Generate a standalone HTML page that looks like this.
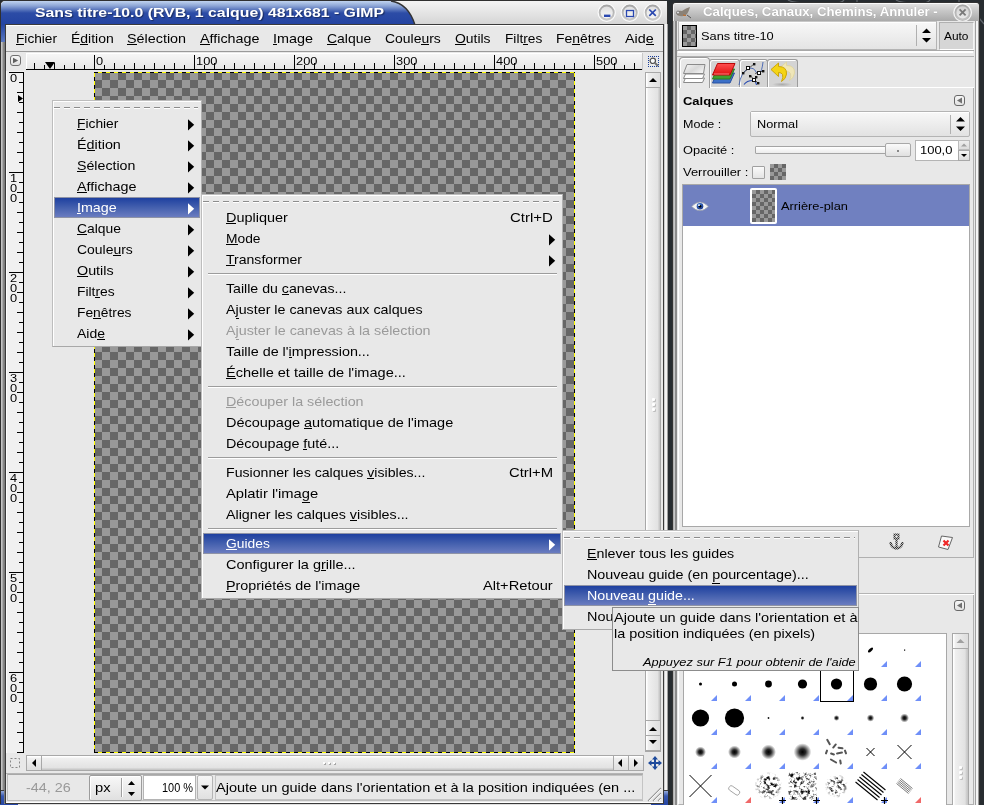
<!DOCTYPE html><html><head><meta charset="utf-8"><style>
html,body{margin:0;padding:0;width:984px;height:805px;overflow:hidden;background:#272c30;font-family:"Liberation Sans",sans-serif}
body>div,body>svg{position:absolute}
.t{white-space:nowrap;transform-origin:0 0}
</style></head><body>
<div style="left:0px;top:0px;width:668px;height:805px;background:#303030;border-radius:5px 5px 0 0"></div>
<div style="left:1px;top:1px;width:666px;height:804px;background:linear-gradient(90deg,#c8c8c8 0,#c0c0c0 1px,#929292 2px,#7c7c7c 3px,#7c7c7c 4px);border-radius:4px 4px 0 0"></div>
<svg style="left:0;top:0" width="668" height="26"><defs><linearGradient id="tb" x1="0" y1="0" x2="0" y2="1"><stop offset="0" stop-color="#c0d4f0"/><stop offset="0.2" stop-color="#8ea6d6"/><stop offset="0.5" stop-color="#2c4ca6"/><stop offset="1" stop-color="#2343a0"/></linearGradient><linearGradient id="tg" x1="0" y1="0" x2="0" y2="1"><stop offset="0" stop-color="#f4f4f4"/><stop offset="1" stop-color="#d4d4d4"/></linearGradient></defs><path d="M1,25 L1,6 Q1,1 6,1 L667,1 L667,25 Z" fill="url(#tg)"/><path d="M1,25 L1,6 Q1,1 6,1 L391,1 C404,3 411,12 415,25 Z" fill="url(#tb)"/><path d="M391,1 C404,3 411,12 415,25" fill="none" stroke="#333" stroke-width="1.3"/></svg>
<div style="left:1px;top:24px;width:4px;height:18px;background:linear-gradient(180deg,#2343a0,#5a78c0)"></div>
<div class="t" style="left:34.50px;top:3.28px;font-size:13.6px;line-height:20px;color:#fff;transform:scaleX(1.1648);font-weight:bold;text-shadow:1px 1px 1px rgba(0,0,0,.4);">Sans titre-10.0 (RVB, 1 calque) 481x681 - GIMP</div>
<svg style="left:596px;top:0px" width="72" height="25"><defs><linearGradient id="bin" x1="0" y1="0" x2="0" y2="1"><stop offset="0" stop-color="#dcdcdc"/><stop offset="0.5" stop-color="#ececec"/><stop offset="1" stop-color="#f6f6f6"/></linearGradient><linearGradient id="brg" x1="0" y1="0" x2="0" y2="1"><stop offset="0" stop-color="#a6a6a6"/><stop offset="1" stop-color="#c8c8c8"/></linearGradient></defs><g stroke="#fff" stroke-opacity="0.85" stroke-width="1.2" fill="none"><circle cx="10.7" cy="12.8" r="8.6"/><circle cx="33.7" cy="12.8" r="8.6"/><circle cx="56.7" cy="12.8" r="8.6"/></g><g fill="url(#bin)" stroke="url(#brg)" stroke-width="1.8"><circle cx="10.7" cy="12.5" r="7"/><circle cx="33.7" cy="12.5" r="7"/><circle cx="56.7" cy="12.5" r="7"/></g><rect x="8" y="14.6" width="6.4" height="2.4" fill="#2a48b0"/><rect x="30.5" y="10.5" width="7" height="6" fill="none" stroke="#2a48b0" stroke-width="1.3"/><path d="M53.3,9.5 L59.8,15.8 M59.8,9.5 L53.3,15.8" stroke="#2a48b0" stroke-width="1.7"/></svg>
<div style="left:5px;top:24px;width:659px;height:780px;background:#3a3a3a"></div>
<div style="left:6px;top:25px;width:657px;height:778px;background:#e8e8e8"></div>
<div style="left:664px;top:24px;width:4px;height:781px;background:linear-gradient(90deg,#d0d0d0 0 1px,#f4f4f4 1px 3px,#a0a0a0 3px)"></div>
<div style="left:6px;top:25px;width:657px;height:1px;background:#fff"></div>
<div style="left:6px;top:51px;width:657px;height:1px;background:#9a9a9a"></div>
<div class="t" style="left:16.00px;top:29.46px;font-size:13.1px;line-height:20px;color:#000;transform:scaleX(1.0430);">Fichier</div>
<div style="left:16.00px;top:44px;width:8.35px;height:1px;background:#000"></div>
<div class="t" style="left:70.50px;top:29.46px;font-size:13.1px;line-height:20px;color:#000;transform:scaleX(1.0660);">Édition</div>
<div style="left:79.81px;top:44px;width:7.77px;height:1px;background:#000"></div>
<div class="t" style="left:127.00px;top:29.46px;font-size:13.1px;line-height:20px;color:#000;transform:scaleX(1.0966);">Sélection</div>
<div style="left:127.00px;top:44px;width:9.58px;height:1px;background:#000"></div>
<div class="t" style="left:200.00px;top:29.46px;font-size:13.1px;line-height:20px;color:#000;transform:scaleX(1.0941);">Affichage</div>
<div style="left:200.00px;top:44px;width:9.56px;height:1px;background:#000"></div>
<div class="t" style="left:273.00px;top:29.46px;font-size:13.1px;line-height:20px;color:#000;transform:scaleX(1.0986);">Image</div>
<div style="left:273.00px;top:44px;width:4.00px;height:1px;background:#000"></div>
<div class="t" style="left:327.00px;top:29.46px;font-size:13.1px;line-height:20px;color:#000;transform:scaleX(1.0647);">Calque</div>
<div style="left:327.00px;top:44px;width:10.07px;height:1px;background:#000"></div>
<div class="t" style="left:385.00px;top:29.46px;font-size:13.1px;line-height:20px;color:#000;transform:scaleX(1.0643);">Couleurs</div>
<div style="left:421.43px;top:44px;width:7.75px;height:1px;background:#000"></div>
<div class="t" style="left:455.00px;top:29.46px;font-size:13.1px;line-height:20px;color:#000;transform:scaleX(1.0631);">Outils</div>
<div style="left:455.00px;top:44px;width:10.83px;height:1px;background:#000"></div>
<div class="t" style="left:505.00px;top:29.46px;font-size:13.1px;line-height:20px;color:#000;transform:scaleX(1.0459);">Filtres</div>
<div style="left:523.27px;top:44px;width:4.56px;height:1px;background:#000"></div>
<div class="t" style="left:556.00px;top:29.46px;font-size:13.1px;line-height:20px;color:#000;transform:scaleX(1.0619);">Fenêtres</div>
<div style="left:572.24px;top:44px;width:7.74px;height:1px;background:#000"></div>
<div class="t" style="left:625.00px;top:29.46px;font-size:13.1px;line-height:20px;color:#000;transform:scaleX(1.0908);">Aide</div>
<div style="left:645.65px;top:44px;width:7.95px;height:1px;background:#000"></div>
<div style="left:10px;top:55px;width:11px;height:11px;border:1px solid #707070;border-radius:3px;box-sizing:border-box;background:linear-gradient(#f6f6f6,#e2e2e2)"></div>
<svg style="left:10px;top:55px" width="11" height="11"><path d="M3,2.8 L8.2,5.5 L3,8.2 Z" fill="#606060"/></svg>
<div style="left:26px;top:53px;width:616px;height:17px;background:linear-gradient(#f6f6f6,#e4e4e4);border-top:1px solid #fff;border-left:1px solid #fff;box-sizing:border-box"></div>
<div style="left:642px;top:53px;width:1px;height:17px;background:#c8c8c8"></div>
<div style="left:26px;top:69px;width:616px;height:1px;background:#000"></div>
<svg style="left:0;top:0" width="984" height="805"><rect x="34" y="63" width="1" height="6" fill="#000"/><rect x="44" y="65" width="1" height="4" fill="#000"/><rect x="54" y="63" width="1" height="6" fill="#000"/><rect x="64" y="65" width="1" height="4" fill="#000"/><rect x="74" y="63" width="1" height="6" fill="#000"/><rect x="84" y="65" width="1" height="4" fill="#000"/><rect x="94" y="55" width="1" height="14" fill="#000"/><rect x="104" y="65" width="1" height="4" fill="#000"/><rect x="114" y="63" width="1" height="6" fill="#000"/><rect x="124" y="65" width="1" height="4" fill="#000"/><rect x="134" y="63" width="1" height="6" fill="#000"/><rect x="144" y="65" width="1" height="4" fill="#000"/><rect x="154" y="63" width="1" height="6" fill="#000"/><rect x="164" y="65" width="1" height="4" fill="#000"/><rect x="174" y="63" width="1" height="6" fill="#000"/><rect x="184" y="65" width="1" height="4" fill="#000"/><rect x="194" y="55" width="1" height="14" fill="#000"/><rect x="204" y="65" width="1" height="4" fill="#000"/><rect x="214" y="63" width="1" height="6" fill="#000"/><rect x="224" y="65" width="1" height="4" fill="#000"/><rect x="234" y="63" width="1" height="6" fill="#000"/><rect x="244" y="65" width="1" height="4" fill="#000"/><rect x="254" y="63" width="1" height="6" fill="#000"/><rect x="264" y="65" width="1" height="4" fill="#000"/><rect x="274" y="63" width="1" height="6" fill="#000"/><rect x="284" y="65" width="1" height="4" fill="#000"/><rect x="294" y="55" width="1" height="14" fill="#000"/><rect x="304" y="65" width="1" height="4" fill="#000"/><rect x="314" y="63" width="1" height="6" fill="#000"/><rect x="324" y="65" width="1" height="4" fill="#000"/><rect x="334" y="63" width="1" height="6" fill="#000"/><rect x="344" y="65" width="1" height="4" fill="#000"/><rect x="354" y="63" width="1" height="6" fill="#000"/><rect x="364" y="65" width="1" height="4" fill="#000"/><rect x="374" y="63" width="1" height="6" fill="#000"/><rect x="384" y="65" width="1" height="4" fill="#000"/><rect x="394" y="55" width="1" height="14" fill="#000"/><rect x="404" y="65" width="1" height="4" fill="#000"/><rect x="414" y="63" width="1" height="6" fill="#000"/><rect x="424" y="65" width="1" height="4" fill="#000"/><rect x="434" y="63" width="1" height="6" fill="#000"/><rect x="444" y="65" width="1" height="4" fill="#000"/><rect x="454" y="63" width="1" height="6" fill="#000"/><rect x="464" y="65" width="1" height="4" fill="#000"/><rect x="474" y="63" width="1" height="6" fill="#000"/><rect x="484" y="65" width="1" height="4" fill="#000"/><rect x="494" y="55" width="1" height="14" fill="#000"/><rect x="504" y="65" width="1" height="4" fill="#000"/><rect x="514" y="63" width="1" height="6" fill="#000"/><rect x="524" y="65" width="1" height="4" fill="#000"/><rect x="534" y="63" width="1" height="6" fill="#000"/><rect x="544" y="65" width="1" height="4" fill="#000"/><rect x="554" y="63" width="1" height="6" fill="#000"/><rect x="564" y="65" width="1" height="4" fill="#000"/><rect x="574" y="63" width="1" height="6" fill="#000"/><rect x="584" y="65" width="1" height="4" fill="#000"/><rect x="594" y="55" width="1" height="14" fill="#000"/><rect x="604" y="65" width="1" height="4" fill="#000"/><rect x="614" y="63" width="1" height="6" fill="#000"/><rect x="624" y="65" width="1" height="4" fill="#000"/><rect x="634" y="63" width="1" height="6" fill="#000"/><path d="M45,62 L55,62 L50,69 Z" fill="#000"/><rect x="6" y="71" width="18" height="682" fill="#f0f0f0"/><rect x="6" y="71" width="1" height="682" fill="#fff"/><rect x="23" y="72" width="1" height="681" fill="#000"/><rect x="9" y="72" width="14" height="1" fill="#000"/><rect x="19" y="82" width="4" height="1" fill="#000"/><rect x="17" y="92" width="6" height="1" fill="#000"/><rect x="19" y="102" width="4" height="1" fill="#000"/><rect x="17" y="112" width="6" height="1" fill="#000"/><rect x="19" y="122" width="4" height="1" fill="#000"/><rect x="17" y="132" width="6" height="1" fill="#000"/><rect x="19" y="142" width="4" height="1" fill="#000"/><rect x="17" y="152" width="6" height="1" fill="#000"/><rect x="19" y="162" width="4" height="1" fill="#000"/><rect x="9" y="172" width="14" height="1" fill="#000"/><rect x="19" y="182" width="4" height="1" fill="#000"/><rect x="17" y="192" width="6" height="1" fill="#000"/><rect x="19" y="202" width="4" height="1" fill="#000"/><rect x="17" y="212" width="6" height="1" fill="#000"/><rect x="19" y="222" width="4" height="1" fill="#000"/><rect x="17" y="232" width="6" height="1" fill="#000"/><rect x="19" y="242" width="4" height="1" fill="#000"/><rect x="17" y="252" width="6" height="1" fill="#000"/><rect x="19" y="262" width="4" height="1" fill="#000"/><rect x="9" y="272" width="14" height="1" fill="#000"/><rect x="19" y="282" width="4" height="1" fill="#000"/><rect x="17" y="292" width="6" height="1" fill="#000"/><rect x="19" y="302" width="4" height="1" fill="#000"/><rect x="17" y="312" width="6" height="1" fill="#000"/><rect x="19" y="322" width="4" height="1" fill="#000"/><rect x="17" y="332" width="6" height="1" fill="#000"/><rect x="19" y="342" width="4" height="1" fill="#000"/><rect x="17" y="352" width="6" height="1" fill="#000"/><rect x="19" y="362" width="4" height="1" fill="#000"/><rect x="9" y="372" width="14" height="1" fill="#000"/><rect x="19" y="382" width="4" height="1" fill="#000"/><rect x="17" y="392" width="6" height="1" fill="#000"/><rect x="19" y="402" width="4" height="1" fill="#000"/><rect x="17" y="412" width="6" height="1" fill="#000"/><rect x="19" y="422" width="4" height="1" fill="#000"/><rect x="17" y="432" width="6" height="1" fill="#000"/><rect x="19" y="442" width="4" height="1" fill="#000"/><rect x="17" y="452" width="6" height="1" fill="#000"/><rect x="19" y="462" width="4" height="1" fill="#000"/><rect x="9" y="472" width="14" height="1" fill="#000"/><rect x="19" y="482" width="4" height="1" fill="#000"/><rect x="17" y="492" width="6" height="1" fill="#000"/><rect x="19" y="502" width="4" height="1" fill="#000"/><rect x="17" y="512" width="6" height="1" fill="#000"/><rect x="19" y="522" width="4" height="1" fill="#000"/><rect x="17" y="532" width="6" height="1" fill="#000"/><rect x="19" y="542" width="4" height="1" fill="#000"/><rect x="17" y="552" width="6" height="1" fill="#000"/><rect x="19" y="562" width="4" height="1" fill="#000"/><rect x="9" y="572" width="14" height="1" fill="#000"/><rect x="19" y="582" width="4" height="1" fill="#000"/><rect x="17" y="592" width="6" height="1" fill="#000"/><rect x="19" y="602" width="4" height="1" fill="#000"/><rect x="17" y="612" width="6" height="1" fill="#000"/><rect x="19" y="622" width="4" height="1" fill="#000"/><rect x="17" y="632" width="6" height="1" fill="#000"/><rect x="19" y="642" width="4" height="1" fill="#000"/><rect x="17" y="652" width="6" height="1" fill="#000"/><rect x="19" y="662" width="4" height="1" fill="#000"/><rect x="9" y="672" width="14" height="1" fill="#000"/><rect x="19" y="682" width="4" height="1" fill="#000"/><rect x="17" y="692" width="6" height="1" fill="#000"/><rect x="19" y="702" width="4" height="1" fill="#000"/><rect x="17" y="712" width="6" height="1" fill="#000"/><rect x="19" y="722" width="4" height="1" fill="#000"/><rect x="17" y="732" width="6" height="1" fill="#000"/><rect x="19" y="742" width="4" height="1" fill="#000"/><rect x="17" y="752" width="6" height="1" fill="#000"/><path d="M18,95 L23,98.5 L18,102 Z" fill="#000"/></svg>
<div class="t" style="left:96.00px;top:51.01px;font-size:11.5px;line-height:20px;color:#000;transform:scaleX(1.1141);">0</div>
<div class="t" style="left:196.00px;top:51.01px;font-size:11.5px;line-height:20px;color:#000;transform:scaleX(1.1141);">100</div>
<div class="t" style="left:296.00px;top:51.01px;font-size:11.5px;line-height:20px;color:#000;transform:scaleX(1.1141);">200</div>
<div class="t" style="left:396.00px;top:51.01px;font-size:11.5px;line-height:20px;color:#000;transform:scaleX(1.1141);">300</div>
<div class="t" style="left:496.00px;top:51.01px;font-size:11.5px;line-height:20px;color:#000;transform:scaleX(1.1141);">400</div>
<div class="t" style="left:596.00px;top:51.01px;font-size:11.5px;line-height:20px;color:#000;transform:scaleX(1.1141);">500</div>
<div class="t" style="left:10.00px;top:68.01px;font-size:11.5px;line-height:20px;color:#000;transform:scaleX(1.1141);">0</div>
<div class="t" style="left:10.00px;top:168.01px;font-size:11.5px;line-height:20px;color:#000;transform:scaleX(1.1141);">1</div>
<div class="t" style="left:10.00px;top:178.01px;font-size:11.5px;line-height:20px;color:#000;transform:scaleX(1.1141);">0</div>
<div class="t" style="left:10.00px;top:188.01px;font-size:11.5px;line-height:20px;color:#000;transform:scaleX(1.1141);">0</div>
<div class="t" style="left:10.00px;top:268.01px;font-size:11.5px;line-height:20px;color:#000;transform:scaleX(1.1141);">2</div>
<div class="t" style="left:10.00px;top:278.01px;font-size:11.5px;line-height:20px;color:#000;transform:scaleX(1.1141);">0</div>
<div class="t" style="left:10.00px;top:288.01px;font-size:11.5px;line-height:20px;color:#000;transform:scaleX(1.1141);">0</div>
<div class="t" style="left:10.00px;top:368.01px;font-size:11.5px;line-height:20px;color:#000;transform:scaleX(1.1141);">3</div>
<div class="t" style="left:10.00px;top:378.01px;font-size:11.5px;line-height:20px;color:#000;transform:scaleX(1.1141);">0</div>
<div class="t" style="left:10.00px;top:388.01px;font-size:11.5px;line-height:20px;color:#000;transform:scaleX(1.1141);">0</div>
<div class="t" style="left:10.00px;top:468.01px;font-size:11.5px;line-height:20px;color:#000;transform:scaleX(1.1141);">4</div>
<div class="t" style="left:10.00px;top:478.01px;font-size:11.5px;line-height:20px;color:#000;transform:scaleX(1.1141);">0</div>
<div class="t" style="left:10.00px;top:488.01px;font-size:11.5px;line-height:20px;color:#000;transform:scaleX(1.1141);">0</div>
<div class="t" style="left:10.00px;top:568.01px;font-size:11.5px;line-height:20px;color:#000;transform:scaleX(1.1141);">5</div>
<div class="t" style="left:10.00px;top:578.01px;font-size:11.5px;line-height:20px;color:#000;transform:scaleX(1.1141);">0</div>
<div class="t" style="left:10.00px;top:588.01px;font-size:11.5px;line-height:20px;color:#000;transform:scaleX(1.1141);">0</div>
<div class="t" style="left:10.00px;top:668.01px;font-size:11.5px;line-height:20px;color:#000;transform:scaleX(1.1141);">6</div>
<div class="t" style="left:10.00px;top:678.01px;font-size:11.5px;line-height:20px;color:#000;transform:scaleX(1.1141);">0</div>
<div class="t" style="left:10.00px;top:688.01px;font-size:11.5px;line-height:20px;color:#000;transform:scaleX(1.1141);">0</div>
<div style="left:94px;top:72px;width:481px;height:681px;background:conic-gradient(#666 25%,#999 0 50%,#666 0 75%,#999 0) 0 0/16px 16px"></div>
<div style="left:94px;top:72px;width:481px;height:1px;background:repeating-linear-gradient(90deg,#000 0 4px,#ff0 4px 8px)"></div>
<div style="left:94px;top:752px;width:481px;height:1px;background:repeating-linear-gradient(90deg,#000 0 4px,#ff0 4px 8px)"></div>
<div style="left:94px;top:72px;width:1px;height:681px;background:repeating-linear-gradient(180deg,#000 0 1px,#ff0 1px 5px,#000 5px 8px)"></div>
<div style="left:574px;top:72px;width:1px;height:681px;background:repeating-linear-gradient(180deg,#000 0 1px,#ff0 1px 5px,#000 5px 8px)"></div>
<svg style="left:648px;top:56px" width="12" height="12"><g fill="#1a3f9a"><rect x="0" y="0" width="1" height="1"/><rect x="0" y="10" width="1" height="1"/><rect x="0" y="0" width="1" height="1"/><rect x="10" y="0" width="1" height="1"/><rect x="2" y="0" width="1" height="1"/><rect x="2" y="10" width="1" height="1"/><rect x="0" y="2" width="1" height="1"/><rect x="10" y="2" width="1" height="1"/><rect x="4" y="0" width="1" height="1"/><rect x="4" y="10" width="1" height="1"/><rect x="0" y="4" width="1" height="1"/><rect x="10" y="4" width="1" height="1"/><rect x="6" y="0" width="1" height="1"/><rect x="6" y="10" width="1" height="1"/><rect x="0" y="6" width="1" height="1"/><rect x="10" y="6" width="1" height="1"/><rect x="8" y="0" width="1" height="1"/><rect x="8" y="10" width="1" height="1"/><rect x="0" y="8" width="1" height="1"/><rect x="10" y="8" width="1" height="1"/><rect x="10" y="0" width="1" height="1"/><rect x="10" y="10" width="1" height="1"/><rect x="0" y="10" width="1" height="1"/><rect x="10" y="10" width="1" height="1"/></g><circle cx="4.8" cy="4.8" r="2.7" fill="#fafafa" stroke="#505050" stroke-width="1.2"/><path d="M7,7 L10,10" stroke="#707070" stroke-width="1.8"/></svg>
<div style="left:645px;top:72px;width:16px;height:680px;background:#a8a8a8"></div>
<div style="left:646px;top:88px;width:14px;height:632px;background:linear-gradient(90deg,#fff 0,#fff 1px,#f0f0f0 2px,#e2e2e2 12px,#c8c8c8 13px)"></div>
<div style="left:652px;top:398px;width:3px;height:3px;background:#fff;border-radius:1px;box-shadow:1px 1px 0 #bdbdbd"></div>
<div style="left:652px;top:403px;width:3px;height:3px;background:#fff;border-radius:1px;box-shadow:1px 1px 0 #bdbdbd"></div>
<div style="left:652px;top:408px;width:3px;height:3px;background:#fff;border-radius:1px;box-shadow:1px 1px 0 #bdbdbd"></div>
<div style="left:646px;top:73px;width:14px;height:14px;background:linear-gradient(90deg,#fff 0,#fff 1px,#f0f0f0 2px,#e0e0e0 13px)"></div>
<div style="left:646px;top:721px;width:14px;height:14px;background:linear-gradient(90deg,#fff 0,#fff 1px,#f0f0f0 2px,#e0e0e0 13px)"></div>
<div style="left:646px;top:736px;width:14px;height:14px;background:linear-gradient(90deg,#fff 0,#fff 1px,#f0f0f0 2px,#e0e0e0 13px)"></div>
<svg style="left:645px;top:72px" width="16" height="680"><path d="M4,10 L8,6 L12,10 Z" fill="#000"/><rect x="0" y="15" width="16" height="1" fill="#a8a8a8"/><rect x="0" y="648" width="16" height="1" fill="#a8a8a8"/><rect x="0" y="663" width="16" height="1" fill="#a8a8a8"/><path d="M4,659 L8,655 L12,659 Z" fill="#000"/><path d="M4,668 L12,668 L8,672 Z" fill="#000"/></svg>
<div style="left:26px;top:755px;width:618px;height:16px;background:#a8a8a8"></div>
<div style="left:42px;top:756px;width:571px;height:14px;background:linear-gradient(#fff 0,#fff 1px,#f0f0f0 2px,#e2e2e2 12px,#c8c8c8 13px)"></div>
<div style="left:27px;top:756px;width:14px;height:14px;background:linear-gradient(#fff 0,#fff 1px,#f0f0f0 2px,#e0e0e0 13px)"></div>
<div style="left:614px;top:756px;width:14px;height:14px;background:linear-gradient(#fff 0,#fff 1px,#f0f0f0 2px,#e0e0e0 13px)"></div>
<div style="left:629px;top:756px;width:14px;height:14px;background:linear-gradient(#fff 0,#fff 1px,#f0f0f0 2px,#e0e0e0 13px)"></div>
<svg style="left:26px;top:755px" width="618" height="16"><path d="M10,4 L6,8 L10,12 Z" fill="#000"/><path d="M596,4 L592,8 L596,12 Z" fill="#000"/><path d="M608,4 L612,8 L608,12 Z" fill="#000"/></svg>
<svg style="left:8px;top:755px" width="16" height="16"><rect x="2.5" y="3.5" width="9" height="9" fill="none" stroke="#888" stroke-width="1" stroke-dasharray="2 2"/></svg>
<svg style="left:647px;top:755px" width="16" height="16"><g fill="#1d4a9c"><path d="M8,1 L11,4.5 L9,4.5 L9,7 L11.5,7 L11.5,5 L15,8 L11.5,11 L11.5,9 L9,9 L9,11.5 L11,11.5 L8,15 L5,11.5 L7,11.5 L7,9 L4.5,9 L4.5,11 L1,8 L4.5,5 L4.5,7 L7,7 L7,4.5 L5,4.5 Z"/></g></svg>
<div style="left:6px;top:773px;width:637px;height:1px;background:#b4b4b4"></div>
<div style="left:7px;top:774px;width:636px;height:27px;border:1px solid #bcbcbc;border-top-color:#a8a8a8;box-sizing:border-box;background:#e8e8e8"></div>
<div class="t" style="left:26.00px;top:778.46px;font-size:13.1px;line-height:20px;color:#999;transform:scaleX(1.1002);">-44, 26</div>
<div style="left:89px;top:775px;width:53px;height:26px;border:1px solid #9c9c9c;box-sizing:border-box;border-radius:2px;background:linear-gradient(#f8f8f8,#e0e0e0);box-shadow:inset 1px 1px 0 #fff"></div>
<div style="left:121px;top:778px;width:1px;height:19px;background:#a0a0a0"></div>
<div style="left:122px;top:778px;width:1px;height:19px;background:#fff"></div>
<svg style="left:122px;top:775px" width="19" height="25"><path d="M6,10 L9.5,6 L13,10 Z M6,17 L13,17 L9.5,21 Z" fill="#000"/></svg>
<div class="t" style="left:95.00px;top:778.46px;font-size:13.1px;line-height:20px;color:#000;transform:scaleX(1.1232);">px</div>
<div style="left:143px;top:775px;width:53px;height:25px;border:1px solid #b4b4b4;box-sizing:border-box;background:#fff"></div>
<div class="t" style="left:162.00px;top:778.46px;font-size:13.1px;line-height:20px;color:#000;transform:scaleX(0.8346);">100 %</div>
<div style="left:197px;top:775px;width:16px;height:25px;border:1px solid #b4b4b4;box-sizing:border-box;border-radius:2px;background:linear-gradient(#f6f6f6,#e0e0e0)"></div>
<svg style="left:197px;top:775px" width="16" height="25"><path d="M4,10.5 L12,10.5 L8,14.5 Z" fill="#000"/></svg>
<div style="left:215px;top:775px;width:428px;height:25px;border:1px solid #c4c4c4;box-sizing:border-box"></div>
<div class="t" style="left:216.00px;top:778.46px;font-size:13.1px;line-height:20px;color:#000;transform:scaleX(1.1089);">Ajoute un guide dans l&#x27;orientation et à la position indiquées (en ...</div>
<svg style="left:646px;top:786px" width="16" height="16"><path d="M15,2 L2,15 M15,7 L7,15 M15,12 L12,15" stroke="#9a9a9a" stroke-width="1.2"/><path d="M15,3 L3,15 M15,8 L8,15 M15,13 L13,15" stroke="#fff" stroke-width="0.8"/></svg>
<div style="left:1px;top:790px;width:3px;height:15px;background:linear-gradient(#a8bce4,#3858b0 40%,#2343a0)"></div>
<div style="left:1px;top:790px;width:3px;height:1px;background:#3a3a3a"></div>
<div style="left:0px;top:804px;width:18px;height:1px;background:#2343a0"></div>
<div style="left:6px;top:804px;width:658px;height:1px;background:#e0e0e0"></div>
<div style="left:0px;top:804px;width:18px;height:1px;background:#2848a8"></div>
<div style="left:664px;top:790px;width:4px;height:15px;background:linear-gradient(#a8bce4,#3858b0 40%,#2343a0)"></div>
<div style="left:664px;top:790px;width:4px;height:1px;background:#3a3a3a"></div>
<div style="left:651px;top:804px;width:17px;height:1px;background:#2848a8"></div>
<div style="left:6px;top:802px;width:657px;height:1px;background:#fff"></div>
<div style="left:323px;top:762px;width:2px;height:2px;background:#fff;box-shadow:1px 1px 0 #a8a8a8"></div>
<div style="left:328px;top:762px;width:2px;height:2px;background:#fff;box-shadow:1px 1px 0 #a8a8a8"></div>
<div style="left:333px;top:762px;width:2px;height:2px;background:#fff;box-shadow:1px 1px 0 #a8a8a8"></div>
<svg style="left:780px;top:0" width="204" height="30"><g stroke="#60666c" stroke-width="1.2" fill="none"><path d="M8,0 Q12,3 30,3 L55,3 Q62,3 64,0"/><path d="M116,0 Q120,3 135,3 L142,3 Q148,3 150,0"/><path d="M77,0 L77,2"/><path d="M179,0 L179,2"/><path d="M199,18 L204,24"/></g></svg>
<div style="left:672px;top:2px;width:308px;height:803px;background:#333;border-radius:4px 4px 0 0"></div>
<div style="left:673px;top:3px;width:306px;height:802px;background:#a0a0a0;border-radius:3px 3px 0 0"></div>
<div style="left:673px;top:3px;width:306px;height:19px;background:linear-gradient(#fafafa 0 1px,#e0e0e0 1px,#c8c8c8 40%,#a6a6a6);border-radius:3px 3px 0 0;border-left:1px solid #f0f0f0;box-sizing:border-box"></div>
<div style="left:673px;top:21px;width:1px;height:784px;background:#b0b0b0"></div>
<div style="left:674px;top:21px;width:1px;height:784px;background:#c8c8c8"></div>
<div style="left:675px;top:21px;width:2px;height:784px;background:#8a8a8a"></div>
<div style="left:677px;top:21px;width:1px;height:784px;background:#e8e8e8"></div>
<div style="left:975px;top:21px;width:1px;height:784px;background:#a0a0a0"></div>
<div style="left:976px;top:21px;width:2px;height:784px;background:#f4f4f4"></div>
<div style="left:978px;top:21px;width:1px;height:784px;background:#999"></div>
<svg style="left:674px;top:6px" width="20" height="13"><path d="M2,7 Q4,4 8,5 Q12,2 16,1 Q15,5 13,8 Q10,11 6,10 Q3,10 2,7 Z" fill="#8a8278"/><circle cx="4" cy="6.5" r="1.5" fill="#ddd" stroke="#555" stroke-width="0.6"/><path d="M13,9 L17,12" stroke="#555" stroke-width="1"/><path d="M9,9 L12,9.5" stroke="#c86a20" stroke-width="1"/></svg>
<div class="t" style="left:703.00px;top:2.42px;font-size:13.2px;line-height:20px;color:#fff;transform:scaleX(1.0033);font-weight:bold;text-shadow:0 0 1px rgba(0,0,0,.25);">Calques, Canaux, Chemins, Annuler -</div>
<svg style="left:952px;top:2px" width="22" height="22"><defs><linearGradient id="cin" x1="0" y1="0" x2="0" y2="1"><stop offset="0" stop-color="#d0d0d0"/><stop offset="1" stop-color="#ececec"/></linearGradient><linearGradient id="crg" x1="0" y1="0" x2="0" y2="1"><stop offset="0" stop-color="#a8a8a8"/><stop offset="1" stop-color="#c4c4c4"/></linearGradient></defs><circle cx="10.6" cy="10.6" r="8.8" fill="none" stroke="#fff" stroke-opacity="0.8" stroke-width="1.3"/><circle cx="10.6" cy="10.4" r="7" fill="url(#cin)" stroke="url(#crg)" stroke-width="1.6"/><path d="M7.6,7.4 L13.6,13.4 M13.6,7.4 L7.6,13.4" stroke="#7a7a7a" stroke-width="1.8"/></svg>
<div style="left:678px;top:21px;width:297px;height:784px;background:#e8e8e8"></div>
<div style="left:678px;top:21px;width:259px;height:29px;border:1px solid #b4b4b4;box-sizing:border-box;background:linear-gradient(#f8f8f8,#e4e4e4);border-top-color:#c8c8c8"></div>
<div style="left:679px;top:22px;width:257px;height:1px;background:#fff"></div>
<div style="left:682px;top:25px;width:15px;height:22px;background:#000"></div>
<div style="left:683px;top:26px;width:13px;height:20px;background:conic-gradient(#666 25%,#999 0 50%,#666 0 75%,#999 0) 0 0/8px 8px"></div>
<div class="t" style="left:701.00px;top:26.41px;font-size:11.8px;line-height:20px;color:#000;transform:scaleX(1.0873);">Sans titre-10</div>
<div style="left:916px;top:25px;width:1px;height:21px;background:#b0b0b0"></div>
<svg style="left:917px;top:21px" width="20" height="29"><path d="M5,12 L9.5,7.5 L14,12 Z M5,17 L14,17 L9.5,21.5 Z" fill="#000"/></svg>
<div style="left:939px;top:22px;width:35px;height:28px;border:1px solid #b0b0b0;box-sizing:border-box;background:#d6d6d6;border-bottom-color:#fff;border-right-color:#f4f4f4"></div>
<div class="t" style="left:944.00px;top:26.41px;font-size:11.8px;line-height:20px;color:#000;transform:scaleX(1.0093);">Auto</div>
<div style="left:677px;top:50px;width:297px;height:1px;background:#a8a8a8"></div>
<div style="left:678px;top:51px;width:295px;height:5px;background:linear-gradient(#fff,#fff 2px,#e8e8e8 2px)"></div>
<div style="left:677px;top:56px;width:297px;height:1px;background:#b0b0b0"></div>
<div style="left:709px;top:59px;width:31px;height:28px;background:#d4d4d4;border:1px solid #9c9c9c;border-bottom:none;border-radius:3px 3px 0 0;box-sizing:border-box;box-shadow:inset 1px 1px 0 #fff"></div>
<div style="left:739px;top:59px;width:29px;height:28px;background:#d4d4d4;border:1px solid #9c9c9c;border-bottom:none;border-radius:3px 3px 0 0;box-sizing:border-box;box-shadow:inset 1px 1px 0 #fff"></div>
<div style="left:767px;top:59px;width:31px;height:28px;background:#d4d4d4;border:1px solid #9c9c9c;border-bottom:none;border-radius:3px 3px 0 0;box-sizing:border-box;box-shadow:inset 1px 1px 0 #fff"></div>
<div style="left:678px;top:87px;width:296px;height:471px;border:1px solid #b0b0b0;border-top-color:#fff;border-left-color:#fff;box-sizing:border-box;background:#e8e8e8"></div>
<div style="left:678px;top:87px;width:296px;height:1px;background:#fff"></div>
<div style="left:680px;top:87px;width:29px;height:1px;background:#e8e8e8"></div>
<div style="left:679px;top:57px;width:31px;height:31px;background:#e8e8e8;border:1px solid #9c9c9c;border-bottom:none;border-radius:4px 4px 0 0;box-sizing:border-box;box-shadow:inset 1px 1px 0 #fff"></div>
<svg style="left:676px;top:56px" width="124" height="34"><defs><linearGradient id="lw" x1="0" y1="0" x2="1" y2="0.6"><stop offset="0" stop-color="#f8f8f8"/><stop offset="0.6" stop-color="#d8d8d8"/><stop offset="1" stop-color="#f0f0f0"/></linearGradient><linearGradient id="lr" x1="0" y1="0" x2="0" y2="1"><stop offset="0" stop-color="#ff5050"/><stop offset="1" stop-color="#e01010"/></linearGradient><radialGradient id="ush" cx="0.5" cy="0.5" r="0.5"><stop offset="0" stop-color="#999" stop-opacity="0.7"/><stop offset="1" stop-color="#999" stop-opacity="0"/></radialGradient></defs><path d="M7.5,26.5 L26.5,26.5 L28.5,22 L9.5,22 Z" fill="#fff" stroke="#8a8a8a" stroke-width="1"/><path d="M7.5,22.5 L26.5,22.5 L28.5,18 L9.5,18 Z" fill="#fff" stroke="#8a8a8a" stroke-width="1"/><path d="M7.5,17.5 L27.5,17.5 L29,8.5 L11,8.5 Z" fill="url(#lw)" stroke="#8a8a8a" stroke-width="1"/><path d="M36.5,27 L54,27 L58.5,17 L41,17 Z" fill="#3c70c8" stroke="#2850a0" stroke-width="1"/><path d="M36.5,23 L54,23 L58.5,13 L41,13 Z" fill="#40a030" stroke="#2a7a20" stroke-width="1"/><path d="M36.5,19 L54,19 L59,7.5 L41.5,7.5 Z" fill="url(#lr)" stroke="#b80808" stroke-width="1"/><path d="M38,18 L53,18" stroke="#ff9a9a" stroke-width="0.8"/><path d="M63,29 Q65,16 72.5,12.5 Q78,11 80,16 Q82,18.5 83.5,17.5 Q86,15 87,6" stroke="#3a5cb0" stroke-width="1" fill="none" opacity="0.85"/><path d="M68,28.5 Q71,24 78.5,24.5 Q80,26 80.5,29" stroke="#2a4cb0" stroke-width="1.1" fill="none"/><path d="M67,17 L78,8 M79,17.5 L87,15 M74,19.5 L82,27" stroke="#333" stroke-width="0.8"/><g fill="#111"><rect x="77" y="7" width="2.4" height="2.4"/><rect x="66" y="16" width="2.4" height="2.4"/><rect x="86" y="14" width="2.4" height="2.4"/><rect x="79" y="20" width="2.4" height="2.4"/><rect x="73" y="19" width="2.4" height="2.4"/><rect x="81" y="26" width="2.4" height="2.4"/></g><g fill="#fff" stroke="#111" stroke-width="1"><rect x="70.5" y="10.5" width="3" height="3"/><rect x="81.5" y="15.5" width="3" height="3"/><rect x="76.5" y="22.5" width="3" height="3"/></g><ellipse cx="106" cy="28.5" rx="10" ry="2.2" fill="url(#ush)"/><path d="M103,12.5 L110.5,6 L110.5,9.5 Q119,9.5 118.5,17 Q118,22 113.5,24.5 Q115.5,20 114.5,17.5 Q113.5,15.5 110.5,15.5 L110.5,19.5 Z" fill="#efe6b8" stroke="#e0d49a" stroke-width="0.8"/><path d="M95,13.5 L102.5,7 L102.5,10.5 Q111,10.5 110.5,18 Q110,23 105.5,25.5 Q107.5,21 106.5,18.5 Q105.5,16.5 102.5,16.5 L102.5,20.5 Z" fill="#f4d416" stroke="#c8a000" stroke-width="0.9"/></svg>
<div class="t" style="left:683.00px;top:90.91px;font-size:11.8px;line-height:20px;color:#000;transform:scaleX(1.1001);font-weight:bold;">Calques</div>
<div style="left:954px;top:95px;width:11px;height:11px;border:1px solid #686868;border-radius:3px;box-sizing:border-box;background:linear-gradient(#f6f6f6,#e2e2e2)"></div>
<svg style="left:954px;top:95px" width="11" height="11"><path d="M3,5.5 L8,2.5 L8,8.5 Z" fill="#707070"/></svg>
<div class="t" style="left:683.00px;top:113.91px;font-size:11.8px;line-height:20px;color:#000;transform:scaleX(1.0614);">Mode :</div>
<div style="left:750px;top:111px;width:220px;height:26px;border:1px solid #b4b4b4;box-sizing:border-box;border-radius:2px;background:linear-gradient(#f8f8f8,#e2e2e2)"></div>
<div style="left:751px;top:112px;width:218px;height:1px;background:#fff"></div>
<div class="t" style="left:757.00px;top:113.91px;font-size:11.8px;line-height:20px;color:#000;transform:scaleX(1.0780);">Normal</div>
<div style="left:950px;top:115px;width:1px;height:19px;background:#b0b0b0"></div>
<svg style="left:951px;top:111px" width="19" height="26"><path d="M5,10.5 L9.5,6 L14,10.5 Z M5,15.5 L14,15.5 L9.5,20 Z" fill="#000"/></svg>
<div class="t" style="left:683.00px;top:139.91px;font-size:11.8px;line-height:20px;color:#000;transform:scaleX(1.0855);">Opacité :</div>
<div style="left:755px;top:146px;width:131px;height:8px;border:1px solid #a4a4a4;box-sizing:border-box;border-radius:1px;background:linear-gradient(#fff,#ececec)"></div>
<div style="left:885px;top:143px;width:26px;height:14px;border:1px solid #a8a8a8;box-sizing:border-box;border-radius:2px;background:linear-gradient(#fafafa,#e0e0e0)"></div>
<div style="left:897px;top:150px;width:2px;height:2px;background:#888"></div>
<div style="left:915px;top:140px;width:44px;height:21px;border:1px solid #b4b4b4;box-sizing:border-box;background:#fff;border-right:none"></div>
<div class="t" style="left:920.00px;top:139.91px;font-size:11.8px;line-height:20px;color:#000;transform:scaleX(1.0984);">100,0</div>
<div style="left:958px;top:140px;width:12px;height:10px;border:1px solid #bcbcbc;box-sizing:border-box;background:linear-gradient(#eeeeee,#dcdcdc)"></div>
<div style="left:958px;top:150px;width:12px;height:11px;border:1px solid #a8a8a8;box-sizing:border-box;background:linear-gradient(#f4f4f4,#dcdcdc)"></div>
<svg style="left:958px;top:140px" width="12" height="21"><path d="M3,6.5 L6,3.5 L9,6.5 Z" fill="#a0a0a0"/><path d="M3,14 L9,14 L6,17 Z" fill="#000"/></svg>
<div class="t" style="left:683.00px;top:161.91px;font-size:11.8px;line-height:20px;color:#000;transform:scaleX(1.0944);">Verrouiller :</div>
<div style="left:752px;top:166px;width:13px;height:13px;border:1px solid #a0a0a0;box-sizing:border-box;background:linear-gradient(#fafafa,#e4e4e4);border-radius:1px"></div>
<div style="left:770px;top:164px;width:16px;height:16px;background:conic-gradient(#666 25%,#999 0 50%,#666 0 75%,#999 0) 0 0/8px 8px"></div>
<div style="left:682px;top:184px;width:288px;height:343px;border:1px solid #a8a8a8;box-sizing:border-box;background:#fff"></div>
<div style="left:683px;top:185px;width:286px;height:41px;background:#7080c0"></div>
<svg style="left:691px;top:201px" width="18" height="11"><defs><radialGradient id="iris" cx="0.4" cy="0.35" r="0.6"><stop offset="0" stop-color="#4a8ae0"/><stop offset="1" stop-color="#1a3a90"/></radialGradient></defs><path d="M0.5,5.5 Q9,-3.5 17.5,5.5 Q9,14 0.5,5.5 Z" fill="#f4f4f4" stroke="#8890a8" stroke-width="0.8"/><circle cx="9" cy="5.3" r="3.3" fill="url(#iris)"/><circle cx="9" cy="5.3" r="1.4" fill="#000"/><circle cx="8" cy="4.2" r="0.9" fill="#fff"/></svg>
<div style="left:750px;top:188px;width:27px;height:36px;background:#fff;border-radius:2px"></div>
<div style="left:752px;top:190px;width:23px;height:32px;background:conic-gradient(#666 25%,#999 0 50%,#666 0 75%,#999 0) 0 0/8px 8px"></div>
<div class="t" style="left:781.00px;top:196.41px;font-size:11.8px;line-height:20px;color:#000;transform:scaleX(1.0855);">Arrière-plan</div>
<svg style="left:886px;top:532px" width="72" height="20"><defs><pattern id="dith" width="2" height="2" patternUnits="userSpaceOnUse"><rect width="1" height="1" fill="#333"/><rect x="1" y="1" width="1" height="1" fill="#333"/><rect x="1" width="1" height="1" fill="#bbb"/><rect y="1" width="1" height="1" fill="#bbb"/></pattern></defs><g stroke="url(#dith)" fill="none"><rect x="8.5" y="2.5" width="4" height="4" stroke-width="2"/><path d="M10.5,6 L10.5,16" stroke-width="2.2"/><path d="M4.5,10 Q5,16 10.5,16.5 Q16,16 16.5,10" stroke-width="2.6"/></g><path d="M55.5,4 L66.5,5.5 L62,17.5 L52.5,15 Z" fill="#fafafa" stroke="#666" stroke-width="1"/><path d="M57.5,8.5 L62.5,13.5 M62.5,8.5 L57.5,13.5" stroke="#f02828" stroke-width="2.2"/></svg>
<div style="left:678px;top:593px;width:296px;height:212px;border:1px solid #b0b0b0;border-top-color:#fff;border-left-color:#fff;box-sizing:border-box;background:#e8e8e8"></div>
<div style="left:678px;top:593px;width:296px;height:1px;background:#b4b4b4"></div>
<div style="left:678px;top:594px;width:296px;height:1px;background:#fff"></div>
<div style="left:954px;top:600px;width:11px;height:11px;border:1px solid #686868;border-radius:3px;box-sizing:border-box;background:linear-gradient(#f6f6f6,#e2e2e2)"></div>
<svg style="left:954px;top:600px" width="11" height="11"><path d="M3,5.5 L8,2.5 L8,8.5 Z" fill="#707070"/></svg>
<div style="left:683px;top:633px;width:264px;height:172px;border:1px solid #a8a8a8;border-bottom:none;box-sizing:border-box;background:#fff"></div>
<div style="left:952px;top:633px;width:17px;height:172px;background:#a8a8a8"></div>
<div style="left:953px;top:634px;width:15px;height:14px;background:linear-gradient(90deg,#fff 0,#fff 1px,#f0f0f0 2px,#dedede 14px)"></div>
<div style="left:953px;top:649px;width:15px;height:156px;background:linear-gradient(90deg,#fff 0,#fff 1px,#f0f0f0 2px,#e2e2e2 12px,#c8c8c8 14px)"></div>
<svg style="left:953px;top:634px" width="15" height="14"><path d="M3.5,9 L7.5,5 L11.5,9 Z" fill="#a0a0a0"/></svg>
<div style="left:959px;top:766px;width:3px;height:3px;background:#fff;border-radius:1px;box-shadow:1px 1px 0 #bdbdbd"></div>
<div style="left:959px;top:771px;width:3px;height:3px;background:#fff;border-radius:1px;box-shadow:1px 1px 0 #bdbdbd"></div>
<div style="left:959px;top:776px;width:3px;height:3px;background:#fff;border-radius:1px;box-shadow:1px 1px 0 #bdbdbd"></div>
<svg style="left:684px;top:634px" width="262" height="171"><defs><radialGradient id="soft"><stop offset="0" stop-color="#000"/><stop offset="0.35" stop-color="#000" stop-opacity="0.85"/><stop offset="1" stop-color="#000" stop-opacity="0"/></radialGradient><filter id="tex" x="-20%" y="-20%" width="140%" height="140%"><feTurbulence type="fractalNoise" baseFrequency="0.3" numOctaves="3" seed="7" result="n"/><feColorMatrix in="n" values="0 0 0 0 0  0 0 0 0 0  0 0 0 0 0  -3.2 0 0 0 1.75" result="a"/><feComposite in="a" in2="SourceGraphic" operator="in"/></filter><radialGradient id="blob"><stop offset="0" stop-color="#000"/><stop offset="0.6" stop-color="#000"/><stop offset="1" stop-color="#000" stop-opacity="0"/></radialGradient></defs><ellipse cx="186.5" cy="16" rx="3.2" ry="1.4" transform="rotate(-45 186.5 16)" fill="#000"/><rect x="220.0" y="15.5" width="1.2" height="1.2" fill="#000"/><circle cx="16.5" cy="50" r="1.5" fill="#000"/><circle cx="50.5" cy="50" r="2.5" fill="#000"/><circle cx="84.5" cy="50" r="3.4" fill="#000"/><circle cx="118.5" cy="50" r="4.6" fill="#000"/><circle cx="152.5" cy="50" r="5.6" fill="#000"/><circle cx="186.5" cy="50" r="6.6" fill="#000"/><circle cx="220.5" cy="50" r="7.6" fill="#000"/><circle cx="16.5" cy="84" r="8.6" fill="#000"/><circle cx="50.5" cy="84" r="9.6" fill="#000"/><circle cx="84.5" cy="84" r="1.4" fill="url(#soft)"/><circle cx="118.5" cy="84" r="2.1" fill="url(#soft)"/><circle cx="152.5" cy="84" r="2.9" fill="url(#soft)"/><circle cx="186.5" cy="84" r="3.7" fill="url(#soft)"/><circle cx="220.5" cy="84" r="4.5" fill="url(#soft)"/><circle cx="16.5" cy="118" r="5.5" fill="url(#soft)"/><circle cx="50.5" cy="118" r="6.5" fill="url(#soft)"/><circle cx="84.5" cy="118" r="7.5" fill="url(#soft)"/><circle cx="118.5" cy="118" r="8.8" fill="url(#soft)"/><rect x="141.0" y="107" width="7" height="2" rx="1" fill="#555" transform="rotate(60 144.5 108)"/><rect x="147.5" y="111" width="6" height="2" rx="1" fill="#555" transform="rotate(-50 150.5 112)"/><rect x="153.5" y="113" width="6" height="2" rx="1" fill="#555" transform="rotate(10 156.5 114)"/><rect x="159.0" y="117" width="5" height="2" rx="1" fill="#555" transform="rotate(70 161.5 118)"/><rect x="140.0" y="117" width="5" height="2" rx="1" fill="#555" transform="rotate(-70 142.5 118)"/><rect x="146.0" y="119" width="5" height="2" rx="1" fill="#555" transform="rotate(20 148.5 120)"/><rect x="152.0" y="118" width="7" height="2" rx="1" fill="#555" transform="rotate(-10 155.5 119)"/><rect x="145.5" y="126" width="8" height="2" rx="1" fill="#555" transform="rotate(30 149.5 127)"/><rect x="154.0" y="127" width="5" height="2" rx="1" fill="#555" transform="rotate(80 156.5 128)"/><path d="M182.5,114 L190.5,122 M190.5,114 L182.5,122" stroke="#000" stroke-width="1"/><path d="M213.5,111 L227.5,125 M227.5,111 L213.5,125" stroke="#000" stroke-width="1"/><path d="M5.5,141 L27.5,163 M27.5,141 L5.5,163" stroke="#000" stroke-width="1"/><rect x="44.5" y="154" width="12" height="5" rx="2" fill="#fff" stroke="#999" stroke-width="0.8" transform="rotate(35 50.5 156)"/><circle cx="84.5" cy="152" r="14" fill="url(#blob)" filter="url(#tex)"/><rect x="104.5" y="138" width="28" height="28" rx="3" fill="#000" filter="url(#tex)" opacity="0.95"/><circle cx="152.5" cy="152" r="12" fill="url(#blob)" filter="url(#tex)" opacity="0.85"/><path d="M171.532,147.992 L193.532,165.992" stroke="#000" stroke-width="1.1"/><path d="M173.516,145.496 L195.516,163.496" stroke="#000" stroke-width="1.1"/><path d="M175.5,143.0 L197.5,161.0" stroke="#000" stroke-width="1.1"/><path d="M177.484,140.504 L199.484,158.504" stroke="#000" stroke-width="1.1"/><path d="M179.468,138.008 L201.468,156.008" stroke="#000" stroke-width="1.1"/><path d="M212.516,149.496 L224.516,159.496" stroke="#555" stroke-width="0.8"/><path d="M213.508,148.248 L225.508,158.248" stroke="#555" stroke-width="0.8"/><path d="M214.5,147.0 L226.5,157.0" stroke="#555" stroke-width="0.8"/><path d="M215.492,145.752 L227.492,155.752" stroke="#555" stroke-width="0.8"/><path d="M216.484,144.504 L228.484,154.504" stroke="#555" stroke-width="0.8"/><path d="M33,27 L33,33 L27,33 Z" fill="#6f8ff8"/><path d="M67,27 L67,33 L61,33 Z" fill="#6f8ff8"/><path d="M101,27 L101,33 L95,33 Z" fill="#6f8ff8"/><path d="M135,27 L135,33 L129,33 Z" fill="#6f8ff8"/><path d="M169,27 L169,33 L163,33 Z" fill="#6f8ff8"/><path d="M203,27 L203,33 L197,33 Z" fill="#6f8ff8"/><path d="M237,27 L237,33 L231,33 Z" fill="#6f8ff8"/><path d="M33,61 L33,67 L27,67 Z" fill="#6f8ff8"/><path d="M67,61 L67,67 L61,67 Z" fill="#6f8ff8"/><path d="M101,61 L101,67 L95,67 Z" fill="#6f8ff8"/><path d="M135,61 L135,67 L129,67 Z" fill="#6f8ff8"/><path d="M169,61 L169,67 L163,67 Z" fill="#6f8ff8"/><path d="M203,61 L203,67 L197,67 Z" fill="#6f8ff8"/><path d="M237,61 L237,67 L231,67 Z" fill="#6f8ff8"/><path d="M33,95 L33,101 L27,101 Z" fill="#6f8ff8"/><path d="M67,95 L67,101 L61,101 Z" fill="#6f8ff8"/><path d="M101,95 L101,101 L95,101 Z" fill="#6f8ff8"/><path d="M135,95 L135,101 L129,101 Z" fill="#6f8ff8"/><path d="M169,95 L169,101 L163,101 Z" fill="#6f8ff8"/><path d="M203,95 L203,101 L197,101 Z" fill="#6f8ff8"/><path d="M237,95 L237,101 L231,101 Z" fill="#6f8ff8"/><path d="M33,129 L33,135 L27,135 Z" fill="#6f8ff8"/><path d="M67,129 L67,135 L61,135 Z" fill="#6f8ff8"/><path d="M101,129 L101,135 L95,135 Z" fill="#6f8ff8"/><path d="M135,129 L135,135 L129,135 Z" fill="#6f8ff8"/><path d="M169,129 L169,135 L163,135 Z" fill="#6f8ff8"/><path d="M203,129 L203,135 L197,135 Z" fill="#6f8ff8"/><path d="M237,129 L237,135 L231,135 Z" fill="#6f8ff8"/><path d="M33,163 L33,169 L27,169 Z" fill="#6f8ff8"/><path d="M67,163 L67,169 L61,169 Z" fill="#f06868"/><path d="M101,163 L101,169 L95,169 Z" fill="#6f8ff8"/><path d="M135,163 L135,169 L129,169 Z" fill="#6f8ff8"/><path d="M169,163 L169,169 L163,169 Z" fill="#6f8ff8"/><path d="M203,163 L203,169 L197,169 Z" fill="#6f8ff8"/><path d="M237,163 L237,169 L231,169 Z" fill="#f06868"/><path d="M98.5,163 L98.5,170 M95,166.5 L102,166.5" stroke="#000" stroke-width="1.2"/><path d="M132.5,163 L132.5,170 M129,166.5 L136,166.5" stroke="#000" stroke-width="1.2"/><path d="M200.5,163 L200.5,170 M197,166.5 L204,166.5" stroke="#000" stroke-width="1.2"/><rect x="136.5" y="34.5" width="33" height="33" fill="none" stroke="#000" stroke-width="1"/></svg>
<div style="left:52px;top:100px;width:150px;height:247px;background:#e8e8e8;border:1px solid #bdbdbd;border-right-color:#b0b0b0;border-bottom-color:#a8a8a8;box-sizing:border-box"></div>
<div style="left:53px;top:101px;width:148px;height:1px;background:#fff"></div>
<div style="left:53px;top:101px;width:1px;height:245px;background:#fff"></div>
<div style="left:54px;top:107px;width:144px;height:1px;background:repeating-linear-gradient(90deg,#8c8c8c 0 6px,transparent 6px 10px)"></div>
<div style="left:54px;top:108px;width:144px;height:1px;background:repeating-linear-gradient(90deg,#fff 0 6px,transparent 6px 10px)"></div>
<div class="t" style="left:77.00px;top:114.46px;font-size:13.1px;line-height:20px;color:#000;transform:scaleX(1.0534);">Fichier</div>
<div style="left:77.00px;top:129px;width:8.43px;height:1px;background:#000"></div>
<svg style="left:188px;top:118.5px" width="8" height="13"><path d="M0,0.2 L6.2,5.8 L0,11.4 Z" fill="#000"/></svg>
<div class="t" style="left:77.00px;top:135.46px;font-size:13.1px;line-height:20px;color:#000;transform:scaleX(1.0944);">Édition</div>
<div style="left:86.56px;top:150px;width:7.97px;height:1px;background:#000"></div>
<svg style="left:188px;top:139.5px" width="8" height="13"><path d="M0,0.2 L6.2,5.8 L0,11.4 Z" fill="#000"/></svg>
<div class="t" style="left:77.00px;top:156.46px;font-size:13.1px;line-height:20px;color:#000;transform:scaleX(1.0834);">Sélection</div>
<div style="left:77.00px;top:171px;width:9.47px;height:1px;background:#000"></div>
<svg style="left:188px;top:160.5px" width="8" height="13"><path d="M0,0.2 L6.2,5.8 L0,11.4 Z" fill="#000"/></svg>
<div class="t" style="left:77.00px;top:177.46px;font-size:13.1px;line-height:20px;color:#000;transform:scaleX(1.0943);">Affichage</div>
<div style="left:77.00px;top:192px;width:9.56px;height:1px;background:#000"></div>
<svg style="left:188px;top:181.5px" width="8" height="13"><path d="M0,0.2 L6.2,5.8 L0,11.4 Z" fill="#000"/></svg>
<div style="left:54px;top:197px;width:146px;height:21px;border:1px solid #8e93a6;box-sizing:border-box;background:linear-gradient(#1e40a0,#4460ae 50%,#6a7cc0)"></div>
<div class="t" style="left:77.00px;top:198.46px;font-size:13.1px;line-height:20px;color:#fff;transform:scaleX(1.0898);">Image</div>
<div style="left:77.00px;top:213px;width:3.97px;height:1px;background:#fff"></div>
<svg style="left:188px;top:202.5px" width="8" height="13"><path d="M0,0.2 L6.2,5.8 L0,11.4 Z" fill="#fff"/></svg>
<div class="t" style="left:77.00px;top:219.46px;font-size:13.1px;line-height:20px;color:#000;transform:scaleX(1.0599);">Calque</div>
<div style="left:77.00px;top:234px;width:10.03px;height:1px;background:#000"></div>
<svg style="left:188px;top:223.5px" width="8" height="13"><path d="M0,0.2 L6.2,5.8 L0,11.4 Z" fill="#000"/></svg>
<div class="t" style="left:77.00px;top:240.46px;font-size:13.1px;line-height:20px;color:#000;transform:scaleX(1.0640);">Couleurs</div>
<div style="left:113.42px;top:255px;width:7.75px;height:1px;background:#000"></div>
<svg style="left:188px;top:244.5px" width="8" height="13"><path d="M0,0.2 L6.2,5.8 L0,11.4 Z" fill="#000"/></svg>
<div class="t" style="left:77.00px;top:261.46px;font-size:13.1px;line-height:20px;color:#000;transform:scaleX(1.0934);">Outils</div>
<div style="left:77.00px;top:276px;width:11.14px;height:1px;background:#000"></div>
<svg style="left:188px;top:265.5px" width="8" height="13"><path d="M0,0.2 L6.2,5.8 L0,11.4 Z" fill="#000"/></svg>
<div class="t" style="left:77.00px;top:282.46px;font-size:13.1px;line-height:20px;color:#000;transform:scaleX(1.0572);">Filtres</div>
<div style="left:95.46px;top:297px;width:4.61px;height:1px;background:#000"></div>
<svg style="left:188px;top:286.5px" width="8" height="13"><path d="M0,0.2 L6.2,5.8 L0,11.4 Z" fill="#000"/></svg>
<div class="t" style="left:77.00px;top:303.46px;font-size:13.1px;line-height:20px;color:#000;transform:scaleX(1.0544);">Fenêtres</div>
<div style="left:93.12px;top:318px;width:7.68px;height:1px;background:#000"></div>
<svg style="left:188px;top:307.5px" width="8" height="13"><path d="M0,0.2 L6.2,5.8 L0,11.4 Z" fill="#000"/></svg>
<div class="t" style="left:77.00px;top:324.46px;font-size:13.1px;line-height:20px;color:#000;transform:scaleX(1.0688);">Aide</div>
<div style="left:97.24px;top:339px;width:7.79px;height:1px;background:#000"></div>
<svg style="left:188px;top:328.5px" width="8" height="13"><path d="M0,0.2 L6.2,5.8 L0,11.4 Z" fill="#000"/></svg>
<div style="left:201px;top:194px;width:362px;height:405px;background:#e8e8e8;border:1px solid #bdbdbd;border-right-color:#b0b0b0;border-bottom-color:#a8a8a8;box-sizing:border-box"></div>
<div style="left:202px;top:195px;width:360px;height:1px;background:#fff"></div>
<div style="left:202px;top:195px;width:1px;height:403px;background:#fff"></div>
<div style="left:203px;top:201px;width:356px;height:1px;background:repeating-linear-gradient(90deg,#8c8c8c 0 6px,transparent 6px 10px)"></div>
<div style="left:203px;top:202px;width:356px;height:1px;background:repeating-linear-gradient(90deg,#fff 0 6px,transparent 6px 10px)"></div>
<div class="t" style="left:226.00px;top:208.46px;font-size:13.1px;line-height:20px;color:#000;transform:scaleX(1.1047);">Dupliquer</div>
<div style="left:226.00px;top:223px;width:10.45px;height:1px;background:#000"></div>
<div class="t" style="left:510.08px;top:208.46px;font-size:13.1px;line-height:20px;color:#000;transform:scaleX(1.1449);">Ctrl+D</div>
<div class="t" style="left:226.00px;top:229.46px;font-size:13.1px;line-height:20px;color:#000;transform:scaleX(1.0534);">Mode</div>
<div style="left:226.00px;top:244px;width:11.50px;height:1px;background:#000"></div>
<svg style="left:549px;top:233.5px" width="8" height="13"><path d="M0,0.2 L6.2,5.8 L0,11.4 Z" fill="#000"/></svg>
<div class="t" style="left:226.00px;top:250.46px;font-size:13.1px;line-height:20px;color:#000;transform:scaleX(1.0731);">Transformer</div>
<div style="left:226.00px;top:265px;width:8.59px;height:1px;background:#000"></div>
<svg style="left:549px;top:254.5px" width="8" height="13"><path d="M0,0.2 L6.2,5.8 L0,11.4 Z" fill="#000"/></svg>
<div style="left:208px;top:273px;width:349px;height:1px;background:#9c9c9c"></div>
<div style="left:208px;top:274px;width:349px;height:1px;background:#fff"></div>
<div class="t" style="left:226.00px;top:279.46px;font-size:13.1px;line-height:20px;color:#000;transform:scaleX(1.0806);">Taille du canevas...</div>
<div style="left:281.87px;top:294px;width:7.08px;height:1px;background:#000"></div>
<div class="t" style="left:226.00px;top:300.46px;font-size:13.1px;line-height:20px;color:#000;transform:scaleX(1.0889);">Ajuster le canevas aux calques</div>
<div style="left:235.51px;top:318px;width:3.17px;height:1px;background:#000"></div>
<div class="t" style="left:226.00px;top:321.46px;font-size:13.1px;line-height:20px;color:#9a9a9a;transform:scaleX(1.0936);">Ajuster le canevas à la sélection</div>
<div style="left:235.56px;top:339px;width:3.18px;height:1px;background:#9a9a9a"></div>
<div class="t" style="left:226.00px;top:342.46px;font-size:13.1px;line-height:20px;color:#000;transform:scaleX(1.0952);">Taille de l&#x27;impression...</div>
<div style="left:288.55px;top:357px;width:3.19px;height:1px;background:#000"></div>
<div class="t" style="left:226.00px;top:363.46px;font-size:13.1px;line-height:20px;color:#000;transform:scaleX(1.1112);">Échelle et taille de l&#x27;image...</div>
<div style="left:226.00px;top:378px;width:9.71px;height:1px;background:#000"></div>
<div style="left:208px;top:386px;width:349px;height:1px;background:#9c9c9c"></div>
<div style="left:208px;top:387px;width:349px;height:1px;background:#fff"></div>
<div class="t" style="left:226.00px;top:392.46px;font-size:13.1px;line-height:20px;color:#9a9a9a;transform:scaleX(1.0925);">Découper la sélection</div>
<div style="left:226.00px;top:407px;width:10.34px;height:1px;background:#9a9a9a"></div>
<div class="t" style="left:226.00px;top:413.46px;font-size:13.1px;line-height:20px;color:#000;transform:scaleX(1.1051);">Découpage automatique de l&#x27;image</div>
<div style="left:304.07px;top:428px;width:8.05px;height:1px;background:#000"></div>
<div class="t" style="left:226.00px;top:434.46px;font-size:13.1px;line-height:20px;color:#000;transform:scaleX(1.0956);">Découpage futé...</div>
<div style="left:303.41px;top:449px;width:3.99px;height:1px;background:#000"></div>
<div style="left:208px;top:457px;width:349px;height:1px;background:#9c9c9c"></div>
<div style="left:208px;top:458px;width:349px;height:1px;background:#fff"></div>
<div class="t" style="left:226.00px;top:463.46px;font-size:13.1px;line-height:20px;color:#000;transform:scaleX(1.0785);">Fusionner les calques visibles...</div>
<div style="left:367.36px;top:478px;width:7.06px;height:1px;background:#000"></div>
<div class="t" style="left:508.91px;top:463.46px;font-size:13.1px;line-height:20px;color:#000;transform:scaleX(1.1324);">Ctrl+M</div>
<div class="t" style="left:226.00px;top:484.46px;font-size:13.1px;line-height:20px;color:#000;transform:scaleX(1.1261);">Aplatir l&#x27;image</div>
<div style="left:301.78px;top:502px;width:8.20px;height:1px;background:#000"></div>
<div class="t" style="left:226.00px;top:505.46px;font-size:13.1px;line-height:20px;color:#000;transform:scaleX(1.0908);">Aligner les calques visibles...</div>
<div style="left:349.92px;top:520px;width:7.15px;height:1px;background:#000"></div>
<div style="left:208px;top:528px;width:349px;height:1px;background:#9c9c9c"></div>
<div style="left:208px;top:529px;width:349px;height:1px;background:#fff"></div>
<div style="left:203px;top:533px;width:358px;height:21px;border:1px solid #8e93a6;box-sizing:border-box;background:linear-gradient(#1e40a0,#4460ae 50%,#6a7cc0)"></div>
<div class="t" style="left:226.00px;top:534.46px;font-size:13.1px;line-height:20px;color:#fff;transform:scaleX(1.0554);">Guides</div>
<div style="left:226.00px;top:549px;width:10.75px;height:1px;background:#fff"></div>
<svg style="left:549px;top:538.5px" width="8" height="13"><path d="M0,0.2 L6.2,5.8 L0,11.4 Z" fill="#fff"/></svg>
<div class="t" style="left:226.00px;top:555.46px;font-size:13.1px;line-height:20px;color:#000;transform:scaleX(1.1060);">Configurer la grille...</div>
<div style="left:321.03px;top:570px;width:4.83px;height:1px;background:#000"></div>
<div class="t" style="left:226.00px;top:576.46px;font-size:13.1px;line-height:20px;color:#000;transform:scaleX(1.0957);">Propriétés de l&#x27;image</div>
<div style="left:226.00px;top:591px;width:9.57px;height:1px;background:#000"></div>
<div class="t" style="left:483.24px;top:576.46px;font-size:13.1px;line-height:20px;color:#000;transform:scaleX(1.1205);">Alt+Retour</div>
<div style="left:562px;top:530px;width:297px;height:100px;background:#e8e8e8;border:1px solid #bdbdbd;border-right-color:#b0b0b0;border-bottom-color:#a8a8a8;box-sizing:border-box"></div>
<div style="left:563px;top:531px;width:295px;height:1px;background:#fff"></div>
<div style="left:563px;top:531px;width:1px;height:98px;background:#fff"></div>
<div style="left:564px;top:537px;width:291px;height:1px;background:repeating-linear-gradient(90deg,#8c8c8c 0 6px,transparent 6px 10px)"></div>
<div style="left:564px;top:538px;width:291px;height:1px;background:repeating-linear-gradient(90deg,#fff 0 6px,transparent 6px 10px)"></div>
<div class="t" style="left:587.00px;top:544.46px;font-size:13.1px;line-height:20px;color:#000;transform:scaleX(1.0870);">Enlever tous les guides</div>
<div style="left:587.00px;top:559px;width:9.50px;height:1px;background:#000"></div>
<div class="t" style="left:587.00px;top:565.46px;font-size:13.1px;line-height:20px;color:#000;transform:scaleX(1.0954);">Nouveau guide (en pourcentage)...</div>
<div style="left:712.25px;top:583px;width:7.98px;height:1px;background:#000"></div>
<div style="left:564px;top:585px;width:293px;height:21px;border:1px solid #8e93a6;box-sizing:border-box;background:linear-gradient(#1e40a0,#4460ae 50%,#6a7cc0)"></div>
<div class="t" style="left:587.00px;top:586.46px;font-size:13.1px;line-height:20px;color:#fff;transform:scaleX(1.0892);">Nouveau guide...</div>
<div style="left:648.08px;top:604px;width:7.94px;height:1px;background:#fff"></div>
<div class="t" style="left:587.00px;top:607.46px;font-size:13.1px;line-height:20px;color:#000;transform:scaleX(1.1026);">Nouveau guide à partir de la sélection</div>
<div style="left:612px;top:607px;width:247px;height:64px;background:#e8e8e8;border:1px solid #8c8c8c;box-sizing:border-box"></div>
<div class="t" style="left:614.00px;top:608.46px;font-size:13.1px;line-height:20px;color:#000;transform:scaleX(1.1136);">Ajoute un guide dans l&#x27;orientation et à</div>
<div class="t" style="left:614.00px;top:624.46px;font-size:13.1px;line-height:20px;color:#000;transform:scaleX(1.1011);">la position indiquées (en pixels)</div>
<div class="t" style="left:643.00px;top:652.12px;font-size:11.2px;line-height:20px;color:#000;transform:scaleX(1.1463);font-style:italic;">Appuyez sur F1 pour obtenir de l&#x27;aide</div>
</body></html>
